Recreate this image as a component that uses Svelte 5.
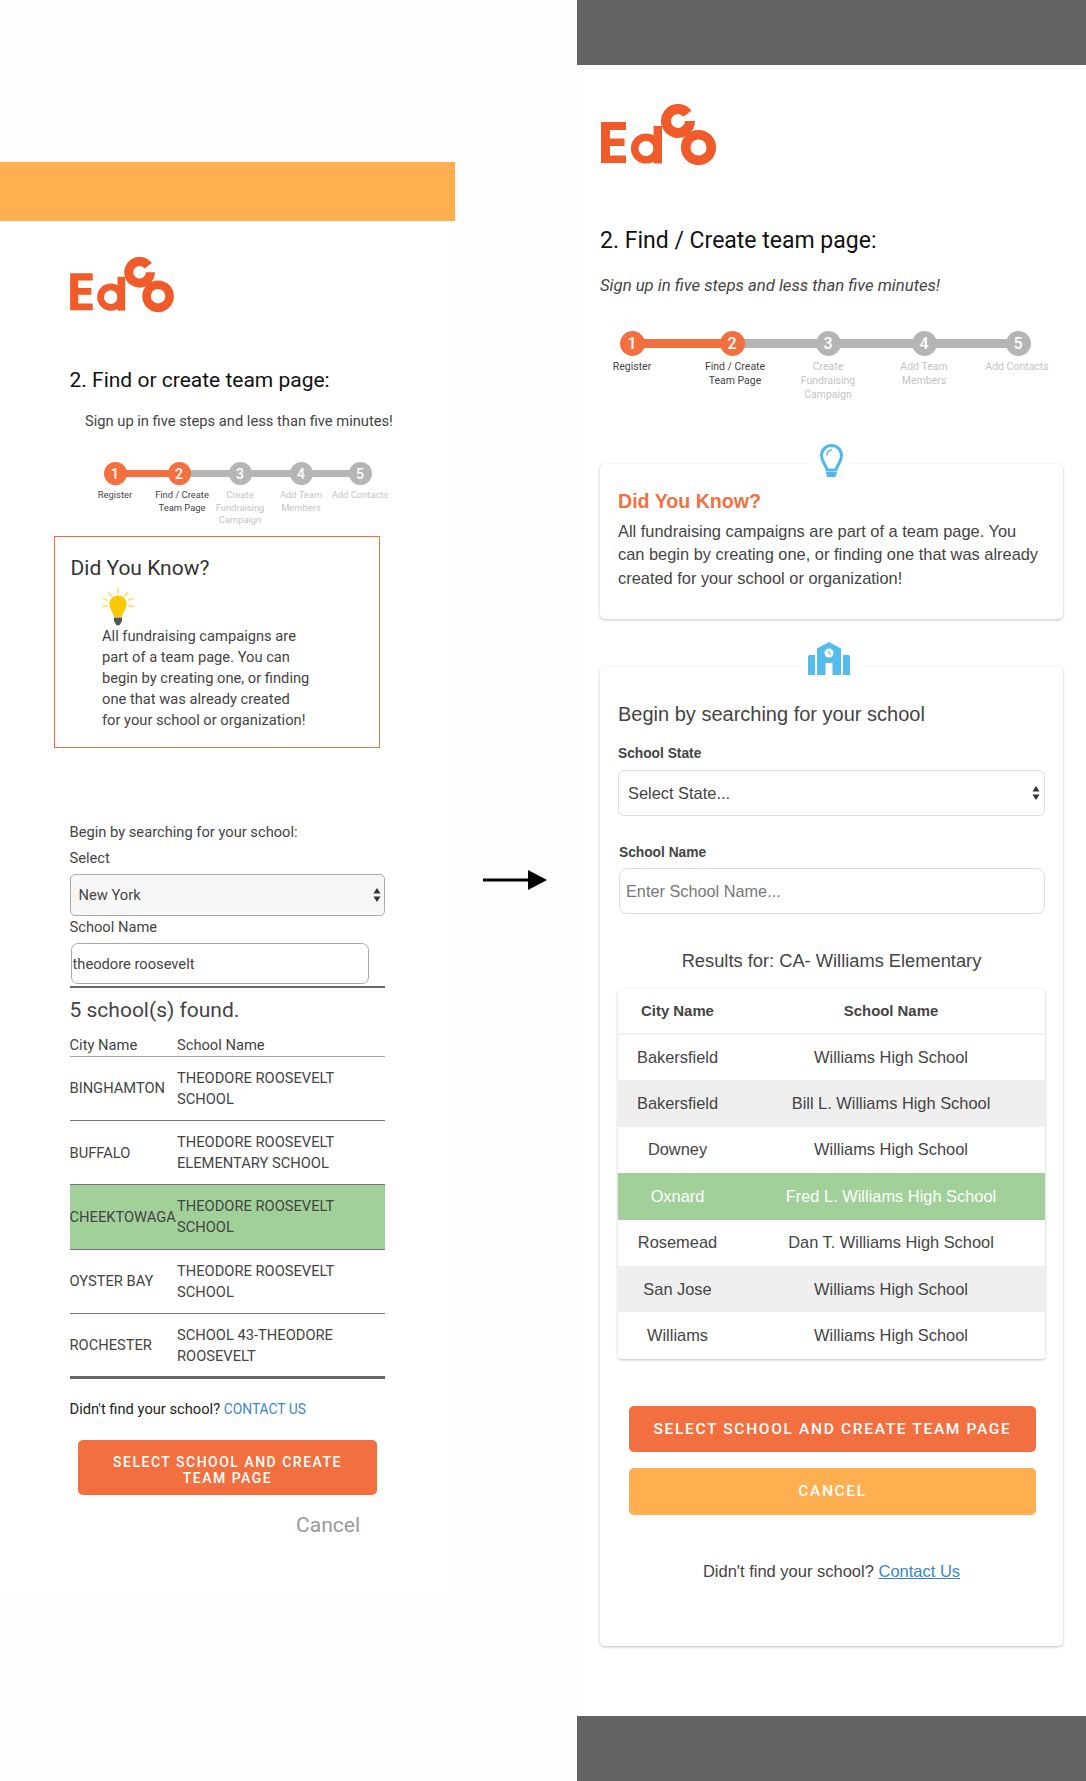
<script>
    // stepper data: c = circle centre, lc = label centre (both from the column's left edge)
    const leftSteps = [
        { n: 1, c: 115, lc: 115, label: ['Register'], done: true },
        { n: 2, c: 179, lc: 182, label: ['Find / Create', 'Team Page'], done: true },
        { n: 3, c: 240, lc: 240, label: ['Create', 'Fundraising', 'Campaign'] },
        { n: 4, c: 301, lc: 301, label: ['Add Team', 'Members'] },
        { n: 5, c: 360, lc: 360, label: ['Add Contacts'] }
    ];
    const rightSteps = [
        { n: 1, c: 55, lc: 55, label: ['Register'], done: true },
        { n: 2, c: 155, lc: 158, label: ['Find / Create', 'Team Page'], done: true },
        { n: 3, c: 251, lc: 251, label: ['Create', 'Fundraising', 'Campaign'] },
        { n: 4, c: 347, lc: 347, label: ['Add Team', 'Members'] },
        { n: 5, c: 441, lc: 440, label: ['Add Contacts'] }
    ];

    const found = [
        { city: 'BINGHAMTON', school: ['THEODORE ROOSEVELT', 'SCHOOL'] },
        { city: 'BUFFALO', school: ['THEODORE ROOSEVELT', 'ELEMENTARY SCHOOL'] },
        { city: 'CHEEKTOWAGA', school: ['THEODORE ROOSEVELT', 'SCHOOL'], picked: true },
        { city: 'OYSTER BAY', school: ['THEODORE ROOSEVELT', 'SCHOOL'] },
        { city: 'ROCHESTER', school: ['SCHOOL 43-THEODORE', 'ROOSEVELT'] }
    ];

    const results = [
        { city: 'Bakersfield', school: 'Williams High School' },
        { city: 'Bakersfield', school: 'Bill L. Williams High School', alt: true },
        { city: 'Downey', school: 'Williams High School' },
        { city: 'Oxnard', school: 'Fred L. Williams High School', picked: true },
        { city: 'Rosemead', school: 'Dan T. Williams High School' },
        { city: 'San Jose', school: 'Williams High School', alt: true },
        { city: 'Williams', school: 'Williams High School' }
    ];
</script>

{#snippet logo(cls)}
    <svg class={cls} viewBox="0 0 115 61" aria-label="Edco">
        <path fill="#f15a29" d="M0 18h25v8H9v8.500h14.500v7.500H9v9.500h16V59H0z" />
        <circle cx="45" cy="44.500" r="11.300" fill="none" stroke="#f15a29" stroke-width="7.600" />
        <rect x="52.500" y="22" width="8.500" height="37.500" fill="#f15a29" />
        <path d="M86.500 9.600A12 12 0 1 0 89 17" fill="none" stroke="#f15a29" stroke-width="10" />
        <circle cx="97.500" cy="43.500" r="12.800" fill="none" stroke="#f15a29" stroke-width="9.500" />
    </svg>
{/snippet}

{#snippet stepper(steps, cls)}
    <div class="stepper {cls}">
        {#each steps.slice(1) as s, i}
            <span
                class="track"
                class:on={s.done}
                style="left:{steps[i].c}px;width:{s.c - steps[i].c}px"
            ></span>
        {/each}
        {#each steps as s}
            <div class="step" class:on={s.done} style="left:{s.c}px">
                <span class="dot">{s.n}</span>
                <span class="step-label" style="margin-left:{(s.lc - s.c) * 2}px">
                    {#each s.label as line}<span>{line}</span>{/each}
                </span>
            </div>
        {/each}
    </div>
{/snippet}

{#snippet updown()}
    <svg class="updown" viewBox="0 0 8 14">
        <path d="M4 0l3.500 5.500h-7zM4 14L.5 8.500h7z" fill="#333" />
    </svg>
{/snippet}

<div class="page">
    <section class="left">
        <div class="orange-bar"></div>
        {@render logo('logo-left')}
        <h2 class="l-title">2. Find or create team page:</h2>
        <p class="l-sub">Sign up in five steps and less than five minutes!</p>
        {@render stepper(leftSteps, 'stepper-left')}

        <div class="l-box">
            <h3>Did You Know?</h3>
            <svg class="yellow-bulb" viewBox="0 0 32 38">
                <g stroke="#ffdf73" stroke-width="1.800" stroke-linecap="round">
                    <path d="M16 1v4M6.500 4.500l2.500 3.500M25.500 4.500L23 8M1 10.500l4 1.500M31 10.500l-4 1.500M1 18.500l4-.5M31 18.500l-4-.5" />
                </g>
                <path fill="#fcc800" d="M16 7.500c5.200 0 8.600 4 8.600 8.600 0 4.600-3.700 7.400-4.600 13h-8c-.9-5.600-4.600-8.400-4.600-13 0-4.600 3.400-8.600 8.600-8.600z" />
                <path fill="#555" d="M12 29.500h8v3.500l-2 3.500a2.500 2.500 0 0 1-4 0l-2-3.500z" />
            </svg>
            <p>All fundraising campaigns are<br />part of a team page. You can<br />begin by creating one, or finding<br />one that was already created<br />for your school or organization!</p>
        </div>

        <p class="l-begin">Begin by searching for your school:</p>
        <div class="l-label first">Select</div>
        <div class="select-wrap l-select">
            <select>
                <option>New York</option>
            </select>
            {@render updown()}
        </div>
        <div class="l-label">School Name</div>
        <input class="l-input" type="text" value="theodore roosevelt" readonly />
        <div class="l-rule"></div>
        <h3 class="l-found">5 school(s) found.</h3>

        <table class="l-table">
            <thead>
                <tr><th class="c1">City Name</th><th>School Name</th></tr>
            </thead>
            <tbody>
                {#each found as row}
                    <tr class:picked={row.picked}>
                        <td class="c1">{row.city}</td>
                        <td>{row.school[0]}<br />{row.school[1]}</td>
                    </tr>
                {/each}
            </tbody>
        </table>

        <p class="l-contact">Didn't find your school? <a href="#contact">CONTACT US</a></p>
        <button class="btn l-btn">SELECT SCHOOL AND CREATE TEAM PAGE</button>
        <div class="l-cancel">Cancel</div>
    </section>

    <div class="middle">
        <svg class="arrow" viewBox="0 0 64 20">
            <path d="M0 10h48" stroke="#000" stroke-width="3" />
            <path d="M45 0l19 10-19 10z" fill="#000" />
        </svg>
    </div>

    <section class="right">
        <div class="gray-bar"></div>
        {@render logo('logo-right')}
        <h2 class="r-title">2. Find / Create team page:</h2>
        <p class="r-sub">Sign up in five steps and less than five minutes!</p>
        {@render stepper(rightSteps, 'stepper-right')}

        <div class="card know">
            <span class="notch bulb-notch">
                <svg class="blue-bulb" viewBox="0 0 23 33">
                    <path fill="none" stroke="#4fb9ee" stroke-width="3" stroke-linejoin="round" d="M7 26c-.6-5-5.500-7.500-5.500-14.500a10 10 0 0 1 20 0c0 7-4.900 9.500-5.500 14.500z" />
                    <path fill="none" stroke="#4fb9ee" stroke-width="1.500" stroke-linecap="round" d="M7 11c0-2.500 1.800-4.500 4.500-5" />
                    <path fill="#4fb9ee" d="M6 28h11l-1 4a1.500 1.500 0 0 1-1.500 1h-6.500a1.500 1.500 0 0 1-1.500-1z" />
                </svg>
            </span>
            <h3>Did You Know?</h3>
            <p>All fundraising campaigns are part of a team page. You<br />can begin by creating one, or finding one that was already<br />created for your school or organization!</p>
        </div>

        <div class="card search">
            <span class="notch school-notch">
                <svg class="school" viewBox="0 0 42 33">
                    <path fill="#54bbef" d="M0 14.500a1.500 1.500 0 0 1 1.500-1.500H7v20H0zM35 13h5.500a1.500 1.500 0 0 1 1.500 1.500V33h-7zM9 6.500L21 0l12 6.500V33h-8.500V21h-7v12H9z" />
                    <circle cx="21" cy="11" r="4.500" fill="#fff" />
                    <path d="M21 8.500v2.800l2 1" fill="none" stroke="#54bbef" stroke-width="1.200" />
                </svg>
            </span>
            <h3 class="begin">Begin by searching for your school</h3>
            <div class="r-label">School State</div>
            <div class="select-wrap r-select">
                <select>
                    <option>Select State...</option>
                </select>
                {@render updown()}
            </div>
            <div class="r-label name">School Name</div>
            <input class="r-input" type="text" placeholder="Enter School Name..." />
            <h3 class="results">Results for: CA- Williams Elementary</h3>

            <table class="r-table">
                <thead>
                    <tr><th class="c1">City Name</th><th>School Name</th></tr>
                </thead>
                <tbody>
                    {#each results as row}
                        <tr class:alt={row.alt} class:picked={row.picked}>
                            <td class="c1">{row.city}</td>
                            <td>{row.school}</td>
                        </tr>
                    {/each}
                </tbody>
            </table>

            <button class="btn r-btn first-btn">SELECT SCHOOL AND CREATE TEAM PAGE</button>
            <button class="btn r-btn cancel-btn">CANCEL</button>
            <p class="r-contact">Didn't find your school? <a href="#contact">Contact Us</a></p>
        </div>

        <div class="gray-bar bottom"></div>
    </section>
</div>

<style>
    :global(body) {
        margin: 0;
        background: #fdfdfd;
    }
    * {
        box-sizing: border-box;
    }
    h2, h3, p {
        margin: 0;
        font-weight: 400;
    }
    .page {
        display: flex;
        width: 1086px;
        height: 1781px;
        overflow: hidden;
        font-family: Roboto, sans-serif;
    }

    /* left mock */
    .left {
        width: 455px;
        height: 1435px;
        margin-top: 162px;
        background: #fff;
        color: #444;
    }
    .orange-bar {
        height: 59px;
        background: #ffae50;
    }
    .logo-left {
        display: block;
        width: 104px;
        height: 55px;
        margin: 36px 0 0 70px;
    }
    .l-title {
        margin: 56px 0 0 69.5px;
        font-size: 21px;
        line-height: 24px;
        color: #111;
    }
    .l-sub {
        margin: 19px 0 0 85px;
        font-size: 14.7px;
        line-height: 20px;
    }

    /* steppers */
    .stepper {
        position: relative;
    }
    .stepper-left {
        height: 65px;
        margin-top: 31px;
    }
    .stepper-right {
        height: 71px;
        margin-top: 35px;
    }
    .track {
        position: absolute;
        background: #b5b5b5;
    }
    .track.on {
        background: #f2703f;
    }
    .stepper-left .track {
        top: 8px;
        height: 7px;
    }
    .stepper-right .track {
        top: 8px;
        height: 9px;
    }
    .step {
        position: absolute;
        top: 0;
        width: 0;
        display: flex;
        flex-direction: column;
        align-items: center;
    }
    .dot {
        flex: none;
        display: flex;
        align-items: center;
        justify-content: center;
        border-radius: 50%;
        background: #b5b5b5;
        color: #fff;
        font-weight: 500;
    }
    .step.on .dot {
        background: #f2703f;
    }
    .step-label {
        display: flex;
        flex-direction: column;
        align-items: center;
        white-space: nowrap;
        color: #c4c4c4;
    }
    .step.on .step-label {
        color: #444;
    }
    .stepper-left .dot {
        width: 23px;
        height: 23px;
        font-size: 14px;
    }
    .stepper-left .step-label {
        margin-top: 4px;
        font-size: 9.4px;
        line-height: 12.6px;
    }
    .stepper-right .dot {
        width: 25px;
        height: 25px;
        font-size: 16px;
    }
    .stepper-right .step-label {
        margin-top: 4px;
        font-size: 10.5px;
        line-height: 14px;
    }

    .l-box {
        width: 326px;
        height: 212px;
        margin: 9px 0 0 54px;
        padding: 19px 0 0 15.5px;
        border: 1px solid #f2703f;
    }
    .l-box h3 {
        font-size: 21px;
        line-height: 24px;
        color: #333;
    }
    .yellow-bulb {
        display: block;
        width: 32px;
        height: 38px;
        margin: 8px 0 0 31.5px;
    }
    .l-box p {
        margin: 0 0 0 31.5px;
        font-size: 14.7px;
        line-height: 21px;
    }
    .l-begin {
        margin: 74px 0 0 69.5px;
        font-size: 14.7px;
        line-height: 20px;
    }
    .l-label {
        margin: 1px 0 0 69.5px;
        font-size: 14.7px;
        line-height: 20px;
    }
    .l-label.first {
        margin-top: 6px;
    }
    .select-wrap {
        position: relative;
    }
    select {
        appearance: none;
        display: block;
        width: 100%;
        height: 100%;
        outline: none;
    }
    .updown {
        position: absolute;
        top: 50%;
        width: 8px;
        height: 14px;
        transform: translateY(-50%);
    }
    .l-select {
        width: 315px;
        height: 42px;
        margin: 6px 0 0 69.5px;
    }
    .l-select select {
        padding: 0 8px;
        border: 1px solid #aaa;
        border-radius: 5px;
        background: #f7f7f7;
        color: #444;
        font: 14.7px Roboto, sans-serif;
    }
    .l-select .updown {
        right: 4px;
    }
    .l-input {
        display: block;
        width: 298px;
        height: 41px;
        margin: 6px 0 0 70.5px;
        padding: 0 1px;
        border: 1px solid #aaa;
        border-radius: 7px;
        color: #444;
        font: 14.7px Roboto, sans-serif;
        outline: none;
    }
    .l-rule {
        width: 315px;
        height: 2px;
        margin: 2px 0 0 69.5px;
        background: #666;
    }
    .l-found {
        margin: 10px 0 0 69.5px;
        font-size: 21px;
        line-height: 24px;
    }
    table {
        border-collapse: collapse;
        border-spacing: 0;
        table-layout: fixed;
    }
    .l-table {
        width: 315px;
        margin-left: 69.5px;
        font-size: 14.7px;
    }
    .l-table .c1 {
        width: 107.5px;
    }
    .l-table th {
        height: 34px;
        padding: 13px 0 0;
        font-weight: 400;
        line-height: 20px;
        text-align: left;
        border-bottom: 1px solid #aaa;
    }
    .l-table td {
        height: 64.4px;
        padding: 1px 0 0;
        line-height: 21px;
        white-space: nowrap;
        border-bottom: 1px solid #777;
    }
    .l-table tr:last-child td {
        border-bottom: 3px solid #666;
    }
    .l-table .picked td {
        background: #a1d099;
    }
    .l-contact {
        margin: 20px 0 0 69.5px;
        font-size: 14.7px;
        line-height: 20px;
        color: #222;
    }
    a {
        color: #3b87cc;
    }
    .l-contact a {
        font-size: 13.8px;
        text-decoration: none;
    }
    .btn {
        display: block;
        border: none;
        border-radius: 5px;
        color: #fff;
        font-family: Roboto, sans-serif;
        font-weight: 500;
        text-align: center;
    }
    .l-btn {
        width: 299px;
        height: 54.5px;
        margin: 21px 0 0 78px;
        padding: 5px 30px 0;
        background: #f2703f;
        font-size: 14px;
        line-height: 16.5px;
        letter-spacing: 1.5px;
    }
    .l-cancel {
        width: 290px;
        margin: 18px 0 0 70px;
        font-size: 21px;
        line-height: 24px;
        color: #999;
        text-align: right;
    }

    .middle {
        width: 122px;
        padding: 870px 0 0 28px;
    }
    .arrow {
        display: block;
        width: 64px;
        height: 20px;
    }

    /* right mock */
    .right {
        display: flex;
        flex-direction: column;
        width: 509px;
        height: 1781px;
        background: #fff;
        color: #444;
    }
    .gray-bar {
        flex: none;
        height: 65px;
        background: #636363;
    }
    .gray-bar.bottom {
        margin-top: auto;
    }
    .logo-right {
        flex: none;
        display: block;
        width: 115px;
        height: 61px;
        margin: 39px 0 0 24px;
    }
    .r-title {
        margin: 62px 0 0 23px;
        font-size: 23px;
        line-height: 28px;
        color: #111;
    }
    .r-sub {
        margin: 21px 0 0 23px;
        font-size: 16.7px;
        line-height: 20px;
        font-style: italic;
    }
    .card {
        position: relative;
        flex: none;
        width: 463px;
        margin-left: 23px;
        border-radius: 5px;
        background: #fff;
        font-family: "Liberation Sans", Arial, sans-serif;
        box-shadow: 0 1px 3px rgba(0, 0, 0, 0.25);
    }
    .notch {
        position: absolute;
        display: flex;
        justify-content: center;
        background: #fff;
    }
    .bulb-notch {
        top: -20px;
        left: 212px;
        width: 38px;
        height: 34px;
    }
    .blue-bulb {
        width: 23px;
        height: 33px;
    }
    .school-notch {
        top: -25px;
        left: 201px;
        width: 55px;
        height: 33px;
    }
    .school {
        width: 42px;
        height: 33px;
    }
    .know {
        height: 155px;
        margin-top: 62px;
        padding: 25px 18px 0;
    }
    .know h3 {
        font-size: 19.6px;
        font-weight: 700;
        line-height: 24px;
        color: #f2703f;
    }
    .know p {
        margin-top: 7px;
        font-size: 16.4px;
        line-height: 23.3px;
        white-space: nowrap;
    }
    .search {
        height: 979px;
        margin-top: 48px;
        padding: 35px 18px 0;
    }
    .begin {
        font-size: 20px;
        line-height: 24px;
    }
    .r-label {
        margin-top: 20px;
        font-size: 13.75px;
        font-weight: 700;
        line-height: 16px;
    }
    .r-label.name {
        margin: 29px 0 0 1px;
    }
    .r-select {
        width: 427px;
        height: 46px;
        margin-top: 8px;
    }
    .r-select select {
        padding: 0 9px;
        border: 1px solid #ddd;
        border-radius: 6px;
        background: #fff;
        color: #444;
        font: 16.4px "Liberation Sans", Arial, sans-serif;
    }
    .r-select .updown {
        right: 5px;
    }
    .r-input {
        display: block;
        width: 426px;
        height: 46px;
        margin: 7px 0 0 1px;
        padding: 0 6px;
        border: 1px solid #ddd;
        border-radius: 8px;
        font: 16.3px "Liberation Sans", Arial, sans-serif;
        outline: none;
    }
    .r-input::placeholder {
        color: #777;
    }
    .results {
        margin-top: 35px;
        font-size: 18.3px;
        line-height: 24px;
        text-align: center;
    }
    .r-table {
        width: 427px;
        margin-top: 16px;
        border-radius: 4px;
        overflow: hidden;
        font-size: 16.4px;
        text-align: center;
        box-shadow: 0 1px 3px rgba(0, 0, 0, 0.25);
    }
    .r-table .c1 {
        width: 119px;
    }
    .r-table th {
        height: 45px;
        padding: 0;
        font-size: 14.9px;
        font-weight: 700;
        border-bottom: 2px solid #f0f0f0;
    }
    .r-table td {
        height: 46.4px;
        padding: 0;
    }
    .r-table .alt td {
        background: #efefef;
    }
    .r-table .picked td {
        background: #a1d099;
        color: #fff;
    }
    .r-btn {
        width: 407px;
        margin-left: 11px;
        font-size: 15.5px;
        letter-spacing: 1.67px;
    }
    .first-btn {
        height: 46px;
        margin-top: 47px;
        background: #f2703f;
    }
    .cancel-btn {
        height: 47px;
        margin-top: 16px;
        background: #ffae50;
    }
    .r-contact {
        margin-top: 46px;
        font-size: 16.5px;
        line-height: 20px;
        text-align: center;
    }
</style>
